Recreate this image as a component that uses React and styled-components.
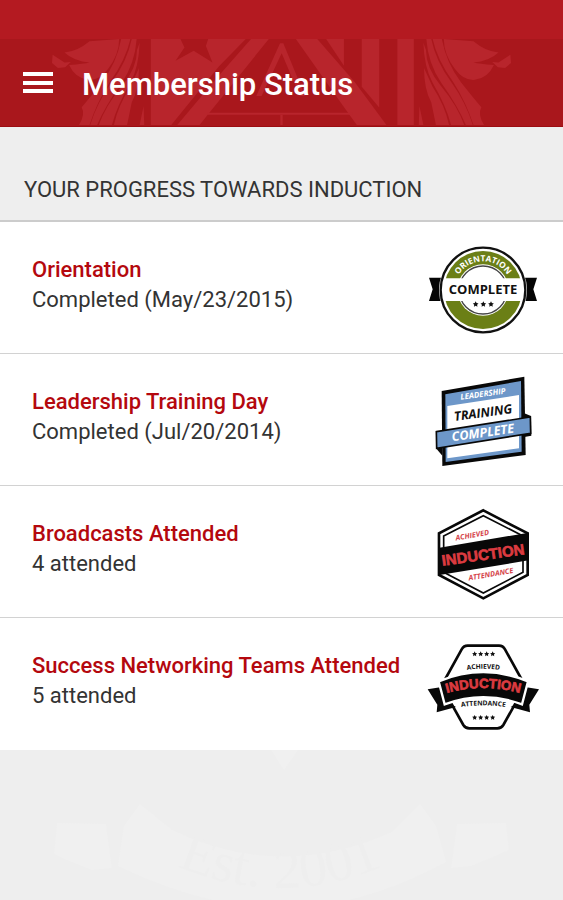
import styled, { createGlobalStyle } from "styled-components";

const GlobalStyle = createGlobalStyle`
  * {
    box-sizing: border-box;
  }

  body {
    margin: 0;
    background-color: #eee;
    font-family: Roboto, sans-serif;
    color: #333;
  }
`;

// Styled components
const StatusStrip = styled.div`
  height: 39px;
  background-color: #b41a21;
`;

const Toolbar = styled.header`
  position: relative;
  display: flex;
  align-items: center;
  gap: 29px;
  height: 88px;
  padding: 0 23px;
  background-color: #a9171c;
  border-bottom: 1px solid #9c0d12;
`;

const ToolbarArt = styled.svg`
  position: absolute;
  inset: 0;
  width: 100%;
  height: 100%;
`;

const MenuButton = styled.button`
  position: relative;
  display: flex;
  padding: 0;
  border: none;
  background: none;
  cursor: pointer;
`;

const Title = styled.h1`
  position: relative;
  margin: 0;
  padding-top: 4px;
  font-size: 31px;
  font-weight: 500;
  color: #fff;
`;

const SectionTitle = styled.h2`
  margin: 0;
  padding: 48px 24px 16px;
  border-bottom: 2px solid #ccc;
  font-size: 22px;
  line-height: 29px;
  font-weight: 400;
`;

const List = styled.ul`
  margin: 0;
  padding: 0;
  list-style: none;
`;

const Row = styled.li`
  display: flex;
  align-items: center;
  justify-content: space-between;
  height: 132px;
  padding: 0 18px 6px 32px;
  background-color: #fff;
  border-bottom: 1px solid #d2d2d2;

  &:last-child {
    border-bottom-color: #fff;
  }
`;

const RowTitle = styled.h3`
  margin: 0;
  font-size: 22px;
  line-height: 30px;
  font-weight: 500;
  color: #b4080e;
`;

const RowText = styled.p`
  margin: 0;
  font-size: 22px;
  line-height: 30px;
`;

const Badge = styled.svg`
  flex: none;
  width: 125px;
  height: 110px;
  margin-left: -20px;
`;

const BadgeText = styled.text`
  font-family: "Open Sans", sans-serif;
  font-size: ${(props) => props.$size}px;
  font-weight: 700;
  font-style: ${(props) => (props.$italic ? "italic" : "normal")};
  fill: ${(props) => props.$color};
  text-anchor: middle;
`;

const InductionText = styled(BadgeText)`
  font-family: "Liberation Sans", sans-serif;
  stroke: ${(props) => props.$color};
  stroke-width: 2px;
`;

const Watermark = styled.svg`
  display: block;
  width: 100%;
  height: 150px;
`;

const WatermarkText = styled.text`
  font-family: "Liberation Serif", serif;
  font-size: 56px;
  fill: #eeeeee;
  text-anchor: middle;
`;

function Star({ x, y, r, color = "#111" }) {
  const points = Array.from({ length: 10 }, (_, i) => {
    const radius = i % 2 ? r * 0.5 : r;
    const angle = (Math.PI / 5) * i - Math.PI / 2;
    return `${x + radius * Math.cos(angle)},${y + radius * Math.sin(angle)}`;
  });
  return <polygon points={points.join(" ")} fill={color} />;
}

function Eagle() {
  return (
    <g>
      <path d="M150 165L186 188L205 187L188 203L166 205L148 190Z" />
      <path d="M186 158Q225 155 262 124L352 117Q352 165 318 208Q292 244 258 241Q218 236 200 196Q245 192 262 188Q215 185 186 158Z" />
      <path d="M358 117L386 117Q372 180 324 247Q285 308 262 378L230 378Q250 345 238 324Q262 296 300 248Q344 190 358 117Z" />
      <path d="M390 117L405 117Q400 190 360 250Q310 320 285 378L264 378Q285 310 328 250Q376 185 390 117Z" />
      <path d="M414 128Q412 200 386 250Q345 320 330 378L290 378Q310 320 360 260Q406 205 406 150Z" />
      <path d="M412 205Q412 270 390 310L376 378L336 378Q348 320 386 262Z" />
      <path d="M426 320L428 378L414 378Z" />
    </g>
  );
}

function CrestArt() {
  return (
    <ToolbarArt viewBox="0 117 1689 264" fill="#b8252c" aria-hidden="true">
      <Eagle />
      <g transform="translate(1689 0) scale(-1 1)">
        <Eagle />
      </g>
      <path d="M448 117H538L550 143L523 183L578 153L635 188L615 138L622 117H736L655 200L510 378H448Z" />
      <path d="M752 117H806L622 345L596 378H528L660 222Z" />
      <path d="M888 117H953L1066 247L1163 378H1073L1030 318Z" />
      <path d="M980 117H1034V198Z" />
      <path d="M1088 117H1141V325L1088 262Z" />
      <path d="M1196 117H1246V378H1196Z" />
      <path d="M620 341H1060V347H620Z" />
      <path d="M841 347H848V378H841Z" />
      <path d="M768 290L840 130H850L916 290H900L845 160L784 290Z" />
    </ToolbarArt>
  );
}

function OrientationBadge() {
  return (
    <Badge viewBox="0 -15 375 330" role="img" aria-label="Orientation complete">
      <defs>
        <path id="orientation-arc" d="M103 165A86 86 0 0 1 275 165" />
      </defs>
      <path d="M27 128H351L340 163L351 198H27L38 163Z" fill="#050505" />
      <circle cx="189" cy="165" r="132" fill="#fff" />
      <circle cx="189" cy="165" r="127" fill="#fff" stroke="#111" strokeWidth="7" />
      <circle cx="189" cy="165" r="117" fill="#6b7f16" />
      <circle cx="189" cy="165" r="77" fill="#fff" />
      <circle
        cx="189"
        cy="165"
        r="72"
        fill="none"
        stroke="#444"
        strokeWidth="4"
      />
      <path d="M72 130H306V198H72Z" fill="#fff" />
      <BadgeText $size={25} $color="#fff">
        <textPath href="#orientation-arc" startOffset="50%">
          ORIENTATION
        </textPath>
      </BadgeText>
      <BadgeText x="189" y="178" $size={39} $color="#111">
        COMPLETE
      </BadgeText>
      <Star x={167} y={208} r={9} />
      <Star x={190} y={208} r={9} />
      <Star x={213} y={208} r={9} />
    </Badge>
  );
}

function LeadershipBadge() {
  return (
    <Badge viewBox="0 -9 375 330" role="img" aria-label="Leadership training complete">
      <path d="M65 78L313 35L317 270L67 303Z" fill="#080808" />
      <path d="M76 88L303 48L305 260L77 291Z" fill="#6d97c9" />
      <path d="M82 123L297 90V250L82 280Z" fill="#fff" />
      <path d="M48 250L67 272V240Z" fill="#080808" />
      <path d="M313 145L333 153L334 212L313 216Z" fill="#080808" />
      <path
        d="M49 200L331 156L332 205L50 250Z"
        fill="#6d97c9"
        stroke="#080808"
        strokeWidth="5"
      />
      <BadgeText transform="translate(190 95) rotate(-8)" $size={24} $color="#fff" $italic>
        LEADERSHIP
      </BadgeText>
      <BadgeText transform="translate(191 156) rotate(-8)" $size={38} $color="#111" $italic>
        TRAINING
      </BadgeText>
      <BadgeText transform="translate(190 216) rotate(-8)" $size={38} $color="#fff" $italic>
        COMPLETE
      </BadgeText>
    </Badge>
  );
}

function BroadcastBadge() {
  return (
    <Badge viewBox="0 -18 375 330" role="img" aria-label="Achieved induction attendance">
      <path
        d="M190 31L323 100V225L190 295L57 225V100Z"
        fill="#fff"
        stroke="#080808"
        strokeWidth="8"
      />
      <path
        d="M190 47L309 108V217L190 279L71 217V108Z"
        fill="#fff"
        stroke="#080808"
        strokeWidth="5"
      />
      <path d="M54 144L326 98V181L54 226Z" fill="#080808" />
      <BadgeText transform="translate(158 113) rotate(-10)" $size={22} $color="#d5444a" $italic>
        ACHIEVED
      </BadgeText>
      <InductionText transform="translate(191 180) rotate(-8)" $size={45} $color="#dc3b40">
        INDUCTION
      </InductionText>
      <BadgeText transform="translate(214 230) rotate(-10)" $size={22} $color="#d5444a" $italic>
        ATTENDANCE
      </BadgeText>
    </Badge>
  );
}

function NetworkingBadge() {
  return (
    <Badge viewBox="0 -27 375 330" role="img" aria-label="Achieved induction attendance">
      <defs>
        <path id="achieved-arc" d="M115 110Q190 92 265 110" />
        <path id="induction-arc" d="M60 180Q190 138 320 180" />
        <path id="attendance-arc" d="M95 222Q190 200 285 222" />
      </defs>
      <path
        d="M143 32H237Q249 32 255 43L303 130L288 202L250 270Q244 280 232 280H148Q136 280 130 270L92 202L77 130L125 43Q131 32 143 32Z"
        fill="#fff"
        stroke="#080808"
        strokeWidth="8"
      />
      <path d="M23 163L70 155L80 200L108 216L50 232L52 209Z" fill="#080808" />
      <path d="M357 163L310 155L300 200L272 216L330 232L328 209Z" fill="#080808" />
      <path
        d="M56 139Q190 84 324 139L306 208Q190 165 74 208Z"
        fill="#080808"
        stroke="#fff"
        strokeWidth="7"
      />
      {[164, 182, 200, 218].map((x) => (
        <g key={x}>
          <Star x={x} y={57} r={8} />
          <Star x={x} y={248} r={8} />
        </g>
      ))}
      <BadgeText $size={20} $color="#111">
        <textPath href="#achieved-arc" startOffset="50%">
          ACHIEVED
        </textPath>
      </BadgeText>
      <InductionText $size={40} $color="#dc3b40">
        <textPath href="#induction-arc" startOffset="50%">
          INDUCTION
        </textPath>
      </InductionText>
      <BadgeText $size={20} $color="#111">
        <textPath href="#attendance-arc" startOffset="50%">
          ATTENDANCE
        </textPath>
      </BadgeText>
    </Badge>
  );
}

const steps = [
  {
    title: "Orientation",
    text: "Completed (May/23/2015)",
    badge: <OrientationBadge />,
  },
  {
    title: "Leadership Training Day",
    text: "Completed (Jul/20/2014)",
    badge: <LeadershipBadge />,
  },
  {
    title: "Broadcasts Attended",
    text: "4 attended",
    badge: <BroadcastBadge />,
  },
  {
    title: "Success Networking Teams Attended",
    text: "5 attended",
    badge: <NetworkingBadge />,
  },
];

function App() {
  return (
    <>
      <GlobalStyle />
      <StatusStrip />
      <Toolbar>
        <CrestArt />
        <MenuButton type="button" aria-label="Open menu">
          <svg width="30" height="21" viewBox="0 0 30 21" fill="#fff">
            <path d="M0 0H30V4H0ZM0 9H30V13H0ZM0 17H30V21H0Z" />
          </svg>
        </MenuButton>
        <Title>Membership Status</Title>
      </Toolbar>
      <main>
        <SectionTitle>YOUR PROGRESS TOWARDS INDUCTION</SectionTitle>
        <List>
          {steps.map((step) => (
            <Row key={step.title}>
              <div>
                <RowTitle>{step.title}</RowTitle>
                <RowText>{step.text}</RowText>
              </div>
              {step.badge}
            </Row>
          ))}
        </List>
      </main>
      <Watermark viewBox="0 0 563 150" fill="#f0f0f0">
        <defs>
          <path id="est-arc" d="M155 106Q280 170 405 106" />
        </defs>
        <path d="M271 0H298L284 20Z" />
        <path d="M57 73L106 74L112 118L92 120L62 108L54 104Z" />
        <path d="M506 73L457 74L451 118L471 116L500 104L509 100Z" />
        <path d="M124 76L140 54L172 80Q280 132 392 82L420 54L436 76L446 112Q360 158 282 158Q205 158 118 116Z" />
        <WatermarkText>
          <textPath href="#est-arc" startOffset="50%">
            Est. 2001
          </textPath>
        </WatermarkText>
      </Watermark>
    </>
  );
}

export default App;
